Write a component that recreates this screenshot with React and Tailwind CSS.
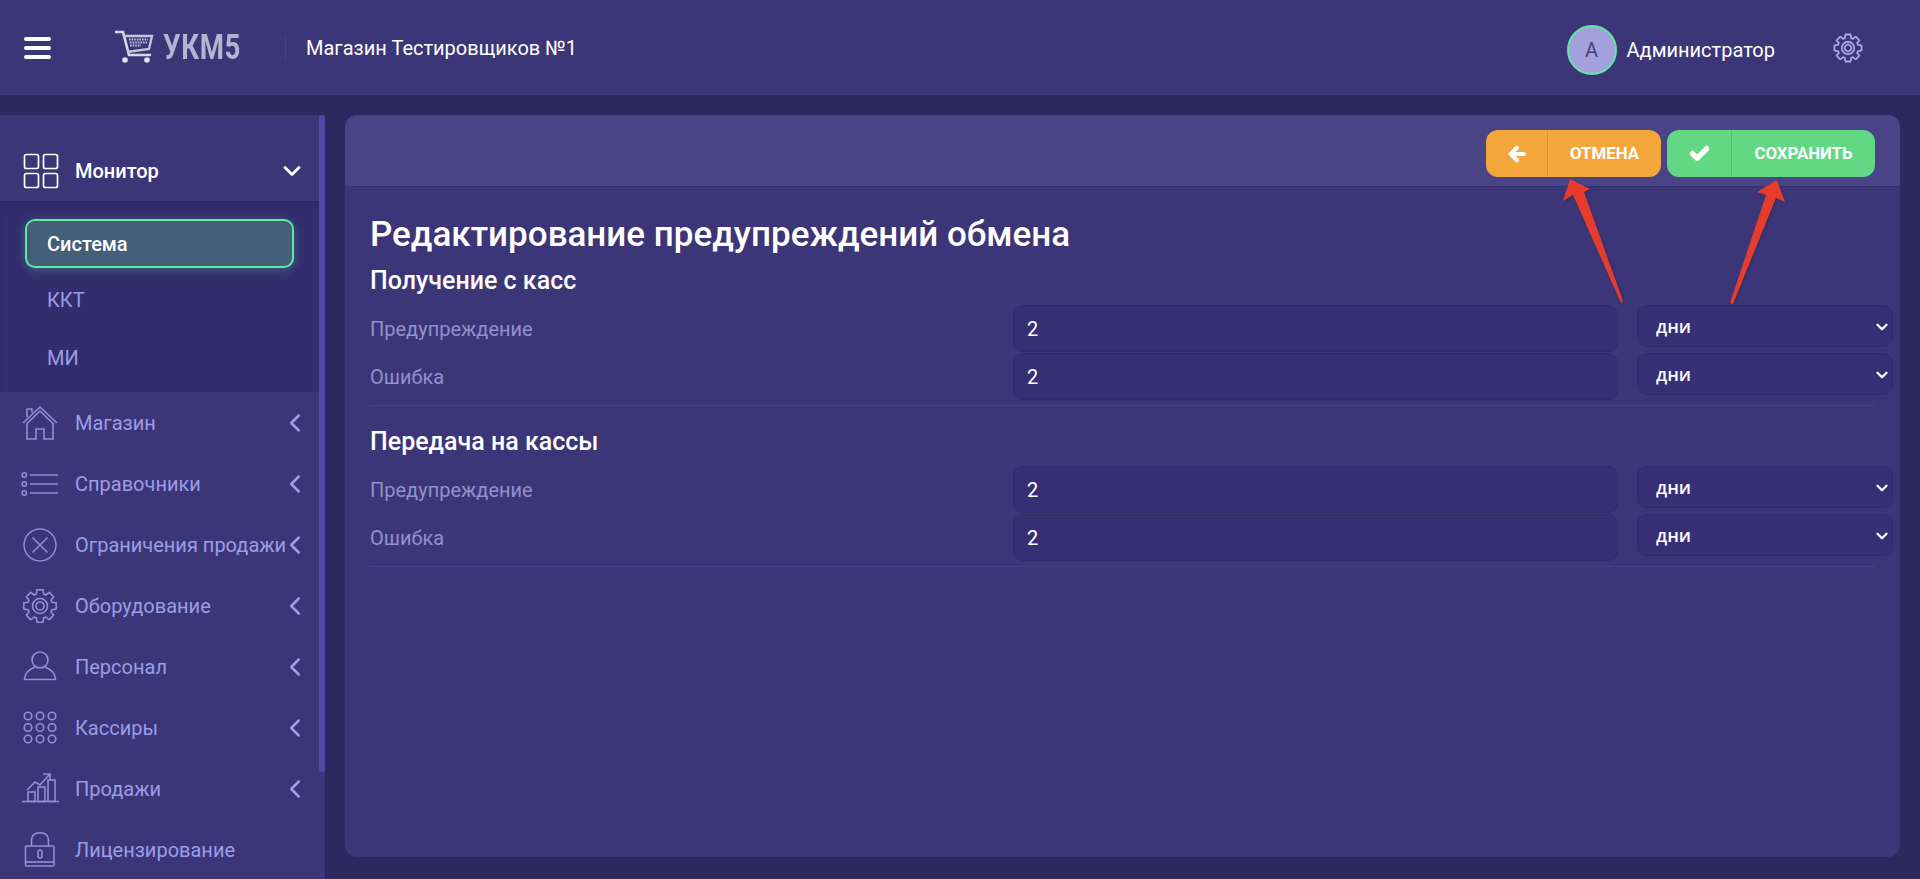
import { ChevronDown, ChevronLeft } from "lucide-react";
import { FaArrowLeft, FaCheck } from "react-icons/fa";

const MonitorIcon = () => (
  <svg width="36" height="36" viewBox="0 0 36 36" fill="none" stroke="currentColor" strokeWidth="1.7">
    <rect x="1.5" y="1.5" width="14" height="14" rx="2" />
    <rect x="20.5" y="1.5" width="14" height="14" rx="2" />
    <rect x="1.5" y="20.5" width="14" height="14" rx="2" />
    <rect x="20.5" y="20.5" width="14" height="14" rx="2" />
  </svg>
);

const HomeIcon = () => (
  <svg width="36" height="36" viewBox="0 0 36 36" fill="none" stroke="currentColor" strokeWidth="1.6">
    <path d="M1 18 L18 2 L35 18 M4 19.5 L18 6 L32 19.5 M5 12 V4 H10 V7.5" />
    <path d="M5 19 V34 H14 V24 H22 V34 H31 V19" />
  </svg>
);

const ListIcon = () => (
  <svg width="38" height="36" viewBox="0 0 38 36" fill="none" stroke="currentColor" strokeWidth="1.6">
    <circle cx="3.3" cy="9" r="2.2" />
    <circle cx="3.3" cy="18" r="2.2" />
    <circle cx="3.3" cy="27" r="2.2" />
    <path d="M9 9 H37 M9 18 H37 M9 27 H37" />
  </svg>
);

const BanIcon = () => (
  <svg width="36" height="36" viewBox="0 0 36 36" fill="none" stroke="currentColor" strokeWidth="1.5">
    <circle cx="18" cy="18" r="16" />
    <path d="M10.5 10.5 L25.5 25.5 M25.5 10.5 L10.5 25.5" />
  </svg>
);

// шестерёнка на 8 зубьев, считаем точки один раз
const gearPath = (() => {
  const pts = [];
  for (let i = 0; i < 8; i++) {
    const a = (i * Math.PI) / 4 - Math.PI / 2;
    const outer = 16.5;
    const root = 12.5;
    [
      [root, -0.3],
      [outer, -0.19],
      [outer, 0.19],
      [root, 0.3],
    ].forEach(([r, d]) => {
      pts.push(`${(18 + r * Math.cos(a + d)).toFixed(2)} ${(18 + r * Math.sin(a + d)).toFixed(2)}`);
    });
  }
  return `M${pts.join(" L")} Z`;
})();

const GearIcon = ({ size = 36, stroke = 1.6 }) => (
  <svg width={size} height={size} viewBox="0 0 36 36" fill="none" stroke="currentColor" strokeWidth={stroke} strokeLinejoin="round">
    <path d={gearPath} />
    <circle cx="18" cy="18" r="7.5" />
    <circle cx="18" cy="18" r="4" />
  </svg>
);

const UserIcon = () => (
  <svg width="36" height="36" viewBox="0 0 36 36" fill="none" stroke="currentColor" strokeWidth="1.6">
    <circle cx="18" cy="11" r="8" />
    <path d="M13 18 C7 20.5 2.5 24 2.5 30.5 H33.5 C33.5 24 29 20.5 23 18" />
  </svg>
);

const DotsIcon = () => {
  const xs = [6, 18, 30];
  const ys = [6, 17.5, 29];
  return (
    <svg width="36" height="36" viewBox="0 0 36 36" fill="none" stroke="currentColor" strokeWidth="1.6">
      {ys.map((y) =>
        xs.map((x) => <circle key={`${x}-${y}`} cx={x} cy={y} r="3.8" />)
      )}
    </svg>
  );
};

const ChartIcon = () => (
  <svg width="40" height="36" viewBox="0 0 40 36" fill="none" stroke="currentColor" strokeWidth="1.6">
    <path d="M2 30.5 H39" />
    <rect x="8" y="21" width="7" height="9.5" />
    <rect x="18" y="16" width="7" height="14.5" />
    <rect x="28" y="9" width="7" height="21.5" />
    <path d="M7 19 L15 11 L20 14 L29 4 M23 3 H30 V9" />
  </svg>
);

const LockIcon = () => (
  <svg width="36" height="36" viewBox="0 0 36 36" fill="none" stroke="currentColor" strokeWidth="1.6">
    <path d="M9.5 14 V9 C9.5 3 13 0.8 18 0.8 C23 0.8 26.5 3 26.5 9 V14" />
    <rect x="3.5" y="14" width="28.5" height="20" rx="1" />
    <path d="M3.5 30 H32" />
    <rect x="16" y="18" width="4" height="8" rx="2" />
  </svg>
);

const CartLogo = () => (
  <svg width="40" height="36" viewBox="0 0 40 36" fill="none" stroke="#d9d8e8" strokeWidth="2.4">
    <path d="M1 2 H9 L15 25 H37" strokeWidth="2.6" />
    <path d="M10 6 H38 L35 19 L13 22" stroke="#c4c3dc" />
    <path d="M15 9.5 H34 M16 12.5 H33 M16 15.5 H27" stroke="#c4c3dc" strokeDasharray="1.6 1" strokeWidth="1.8" />
    <circle cx="11" cy="30" r="2.8" fill="#e4e3ef" stroke="none" />
    <circle cx="33" cy="30" r="2.8" fill="#e4e3ef" stroke="none" />
  </svg>
);

const items = [
  { label: "Магазин", icon: HomeIcon },
  { label: "Справочники", icon: ListIcon },
  { label: "Ограничения продажи", icon: BanIcon },
  { label: "Оборудование", icon: GearIcon },
  { label: "Персонал", icon: UserIcon },
  { label: "Кассиры", icon: DotsIcon },
  { label: "Продажи", icon: ChartIcon },
  { label: "Лицензирование", icon: LockIcon, noArrow: true },
];

const Sidebar = () => (
  <aside className="relative w-[325px] shrink-0 overflow-hidden bg-[#3c3578]">
    <div className="h-[86px] pl-[23px] pr-[19px] pt-[38px] text-white">
      <div className="flex h-[36px] items-center">
        <MonitorIcon />
        <span className="ml-4 flex-1 text-[20px] font-medium">Монитор</span>
        <ChevronDown size={28} strokeWidth={2.4} />
      </div>
    </div>
    <div className="h-[191px] bg-[#332d6e] px-[25px] pt-[18px] text-[20px] text-[#9a9ee8] shadow-[inset_0_6px_8px_-6px_rgba(30,25,80,0.5)]">
      <div className="flex h-[49px] w-[269px] items-center rounded-[10px] border-2 border-[#63e6a4] bg-[#436078] pl-5 font-medium text-white shadow-[0_2px_10px_rgba(99,230,164,0.3)]">
        Система
      </div>
      <div className="flex h-[57px] items-center pl-[22px] pt-[7px]">ККТ</div>
      <div className="flex h-[57px] items-center pl-[22px] pt-2">МИ</div>
    </div>
    <nav className="text-[#9a9ee8]">
      {items.map(({ label, icon: Icon, noArrow }) => (
        <div key={label} className="flex h-[61px] items-center">
          <span className="flex w-[75px] shrink-0 justify-center pl-[5px] pr-[1px] text-[#8f90d8]">
            <Icon />
          </span>
          <span className="w-[205px] shrink-0 whitespace-nowrap text-[20px]">{label}</span>
          {!noArrow && <ChevronLeft size={30} strokeWidth={2} />}
        </div>
      ))}
    </nav>
    <div className="absolute right-0 top-0 h-[657px] w-[6px] rounded-full bg-[#5049a8]" />
  </aside>
);

const Field = ({ label }) => (
  <div className="flex items-start">
    <div className="flex h-[47px] w-[643px] shrink-0 items-center text-[20px] text-[#9291cc]">{label}</div>
    <input
      readOnly
      value="2"
      className="h-[47px] w-[605px] shrink-0 rounded-[10px] border border-[#322b69] bg-[#362f74] px-[13px] text-[20px] text-white outline-none"
    />
    <div className="relative ml-[19px] w-[256px] shrink-0">
      <select className="h-[42px] w-full appearance-none rounded-[10px] border border-[#322b69] bg-[#362f74] px-[18px] font-['Open_Sans',sans-serif] text-[18px] font-semibold text-white outline-none">
        <option>дни</option>
      </select>
      <ChevronDown size={18} strokeWidth={3} className="pointer-events-none absolute right-[2px] top-[13px] text-white" />
    </div>
  </div>
);

const Section = ({ title }) => (
  <section>
    <h2 className="flex h-[31px] items-center text-[25px] font-medium leading-none text-white">{title}</h2>
    <div className="mt-[9px] flex flex-col gap-px">
      <Field label="Предупреждение" />
      <Field label="Ошибка" />
    </div>
    <div className="mr-[25px] mt-[5px] h-px bg-[#45408a]" />
  </section>
);

const ActionButton = ({ icon, label, color, line, iconWidth, textWidth }) => (
  <button type="button" className={`flex h-[47px] items-center rounded-xl text-[16.8px] font-bold text-white ${color}`}>
    <span className={`flex h-full items-center justify-center border-r ${line} ${iconWidth}`}>{icon}</span>
    <span className={`flex h-full items-center justify-center uppercase ${textWidth}`}>{label}</span>
  </button>
);

const Arrows = () => (
  <svg
    className="pointer-events-none absolute left-0 top-0 drop-shadow-[1px_1px_1px_rgba(40,40,80,0.6)]"
    width="1920"
    height="879"
    fill="#e63c2e"
  >
    <polygon points="1570,179 1563,201 1573,195 1621,303 1623,301 1584,192 1590,189" />
    <polygon points="1777,180 1757,192 1766,195 1730,303 1733,304 1776,198 1785,202" />
  </svg>
);

export default function App() {
  return (
    <div className="relative flex h-screen flex-col overflow-hidden bg-[#2d2860] font-['Roboto',sans-serif]">
      <header className="flex h-[95px] shrink-0 items-center bg-[#3c3578] text-white">
        <div className="ml-[24px] flex w-[27px] flex-col gap-[5px]">
          <span className="h-1 rounded-sm bg-white" />
          <span className="h-1 rounded-sm bg-white" />
          <span className="h-1 rounded-sm bg-white" />
        </div>
        <div className="ml-[63px] flex w-[171px] items-center text-[#b4b3d2]">
          <CartLogo />
          <span className="ml-[9px] origin-left scale-x-[0.79] text-[35px] font-bold leading-none tracking-wide">УКМ5</span>
        </div>
        <div className="h-6 w-px bg-[#45408a]" />
        <span className="ml-[20px] text-[20px]">Магазин Тестировщиков №1</span>
        <div className="ml-auto flex items-center">
          <div className="mt-[5px] flex items-center">
            <div className="flex h-[50px] w-[50px] items-center justify-center rounded-full border-2 border-[#63e6a4] bg-[#a3a0dc] text-[20px] text-[#473f86]">
              А
            </div>
            <span className="ml-[10px] text-[20px]">Администратор</span>
          </div>
          <span className="ml-[58px] mr-[57px] text-[#aaa6e8]">
            <GearIcon size={30} stroke={2.2} />
          </span>
        </div>
      </header>
      <div className="flex min-h-0 flex-1 pt-5">
        <Sidebar />
        <main className="mb-[22px] ml-5 mr-5 flex-1 overflow-hidden rounded-xl bg-[#3c3578]">
          <div className="flex h-[72px] items-start justify-end gap-[6px] border-b border-[#342e6f] bg-[#4a4486] pr-[25px] pt-[15px]">
            <ActionButton
              icon={<FaArrowLeft size={18} stroke="currentColor" strokeWidth={40} />}
              label="Отмена"
              color="bg-[#f3a73b]"
              line="border-[#d49535]"
              iconWidth="w-[62px]"
              textWidth="w-[113px]"
            />
            <ActionButton
              icon={<FaCheck size={19} stroke="currentColor" strokeWidth={40} />}
              label="Сохранить"
              color="bg-[#62d884]"
              line="border-[#55bd74]"
              iconWidth="w-[65px]"
              textWidth="w-[143px]"
            />
          </div>
          <div className="pl-[25px] pt-[25px]">
            <h1 className="flex h-[44px] items-center text-[35px] font-medium leading-none text-white">
              Редактирование предупреждений обмена
            </h1>
            <div className="mt-[9px] flex flex-col gap-[20px]">
              <Section title="Получение с касс" />
              <Section title="Передача на кассы" />
            </div>
          </div>
        </main>
      </div>
      <Arrows />
    </div>
  );
}
